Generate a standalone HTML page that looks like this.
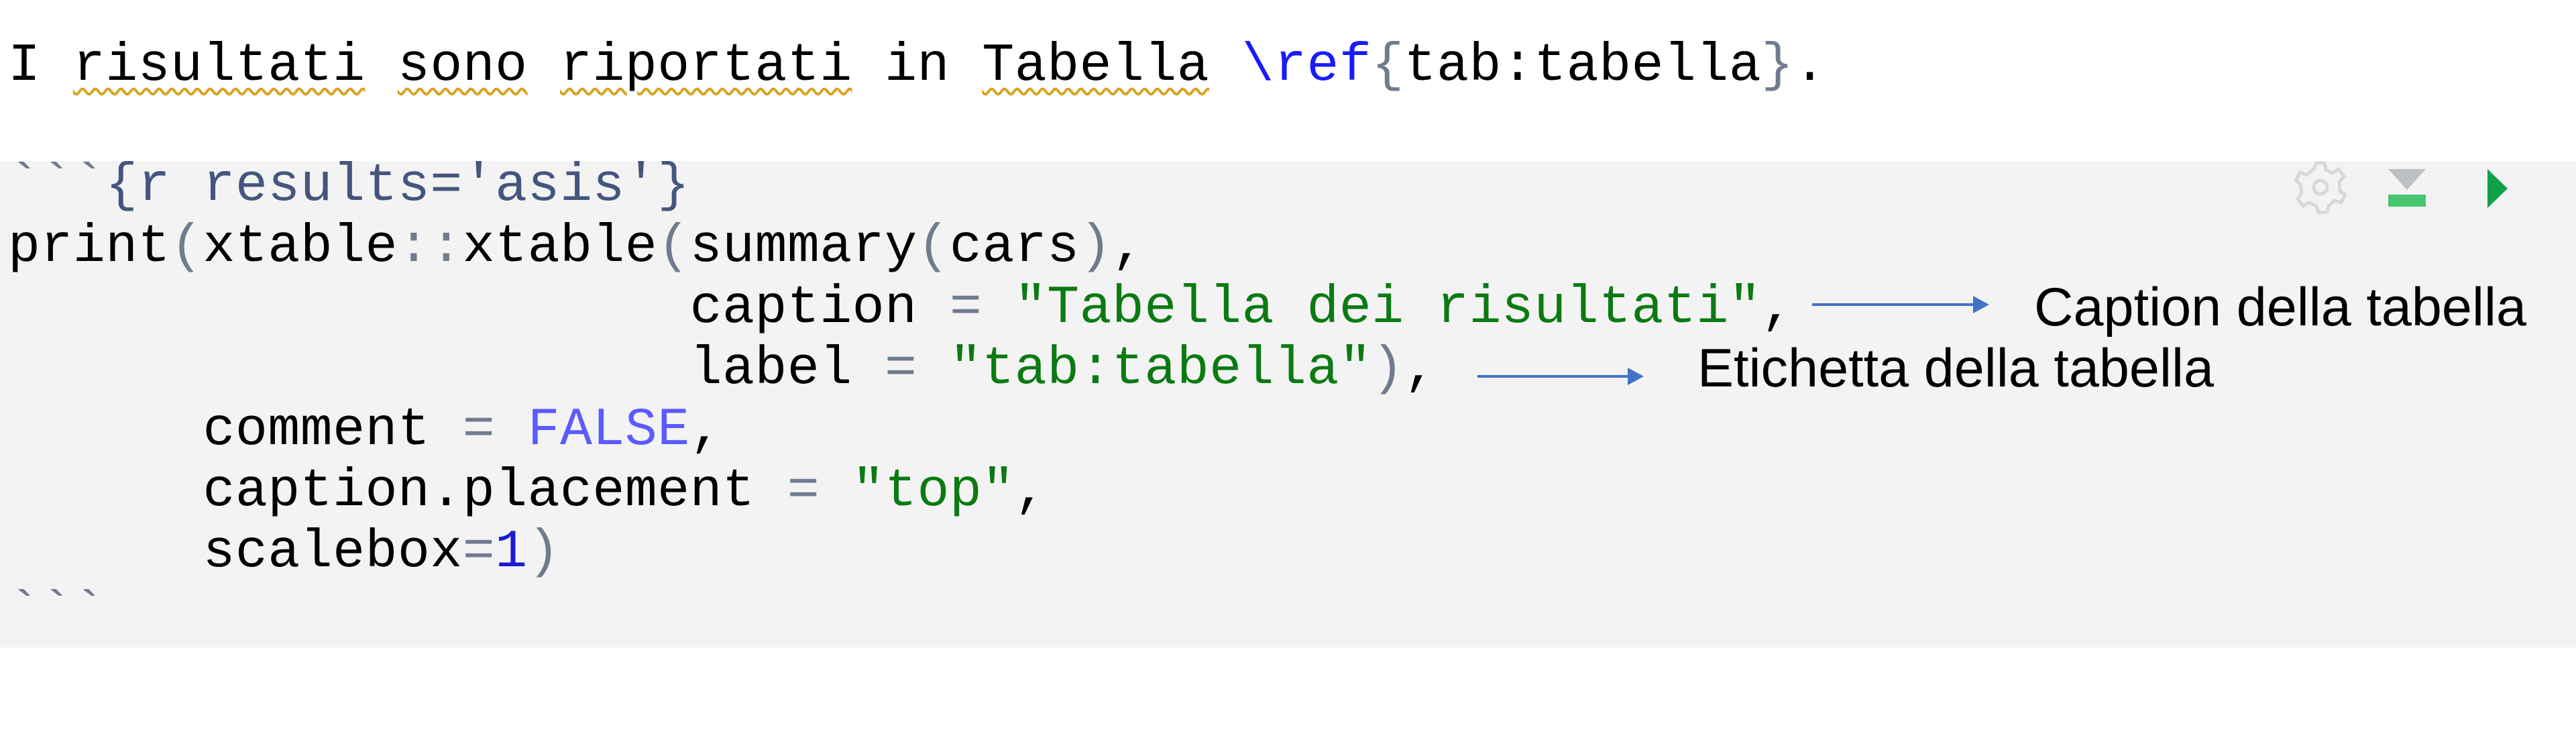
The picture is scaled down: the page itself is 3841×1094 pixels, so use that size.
<!DOCTYPE html>
<html><head><meta charset="utf-8"><style>
html,body{margin:0;padding:0;width:3841px;height:1094px;background:#fff;overflow:hidden;position:relative}
.l{position:absolute;left:12px;white-space:pre;font-family:"Liberation Mono",monospace;font-size:80px;line-height:91px;letter-spacing:0.4px;color:#000}
.blk{position:absolute;left:0;top:240px;width:3841px;height:725px;background:#f3f3f3}
.sq{text-decoration:underline wavy #d9a320;text-decoration-thickness:4px;text-underline-offset:12px}
.g{color:#6f7b8f}.rb{color:#1a1aff}.hd{color:#44567f}.s{color:#0b7a12}.f{color:#5b5bff}.n{color:#1a1ad0}
.a{position:absolute;font-family:"Liberation Sans",Arial,sans-serif;font-size:81px;line-height:91px;color:#000;white-space:pre}
</style></head><body>
<div class="l" style="top:53px">I <span class="sq">risultati</span> <span class="sq">sono</span> <span class="sq">riportati</span> in <span class="sq">Tabella</span> <span class="rb">\ref</span><span class="g">{</span>tab:tabella<span class="g">}</span>.</div>
<div class="blk"></div>
<div class="l" style="top:232px"><span class="g">&#96;&#96;&#96;</span><span class="hd">{r results='asis'}</span></div>
<div class="l" style="top:323px">print<span class="g">(</span>xtable<span class="g">::</span>xtable<span class="g">(</span>summary<span class="g">(</span>cars<span class="g">)</span>,</div>
<div class="l" style="top:414px">                     caption <span class="g">=</span> <span class="s">"Tabella dei risultati"</span>,</div>
<div class="l" style="top:505px">                     label <span class="g">=</span> <span class="s">"tab:tabella"</span><span class="g">)</span>,</div>
<div class="l" style="top:596px">      comment <span class="g">=</span> <span class="f">FALSE</span>,</div>
<div class="l" style="top:687px">      caption.placement <span class="g">=</span> <span class="s">"top"</span>,</div>
<div class="l" style="top:778px">      scalebox<span class="g">=</span><span class="n">1</span><span class="g">)</span></div>
<div class="l" style="top:869px"><span class="g">&#96;&#96;&#96;</span></div>
<svg style="position:absolute;left:0;top:0" width="3841" height="1094">
<g transform="translate(3460,279)" fill="none" stroke="#d8d8d8" stroke-width="5">
<path d="M-6,-36 L6,-36 L8,-26 L18,-21 L27,-27 L35,-16 L28,-8 L29,6 L37,11 L31,23 L21,20 L12,28 L10,37 L-3,38 L-6,28 L-17,23 L-26,28 L-34,17 L-28,9 L-30,-4 L-37,-11 L-30,-22 L-21,-18 L-10,-27 Z"/>
<circle r="10"/></g>
<polygon points="3561,252 3617,252 3589,283" fill="#bcbfc3"/>
<rect x="3561" y="290" width="56" height="18" fill="#47c570"/>
<polygon points="3709,252 3739,281 3709,310" fill="#0fa04a"/>
<g stroke="#4472c4" stroke-width="4" fill="#4472c4">
<line x1="2702" y1="454" x2="2945" y2="454"/><polygon points="2942,441 2966,454 2942,467" stroke="none"/>
<line x1="2203" y1="561" x2="2430" y2="561"/><polygon points="2427,548 2451,561 2427,574" stroke="none"/>
</g></svg>
<div class="a" style="left:3033px;top:413px">Caption della tabella</div>
<div class="a" style="left:2531px;top:504px">Etichetta della tabella</div>
</body></html>
